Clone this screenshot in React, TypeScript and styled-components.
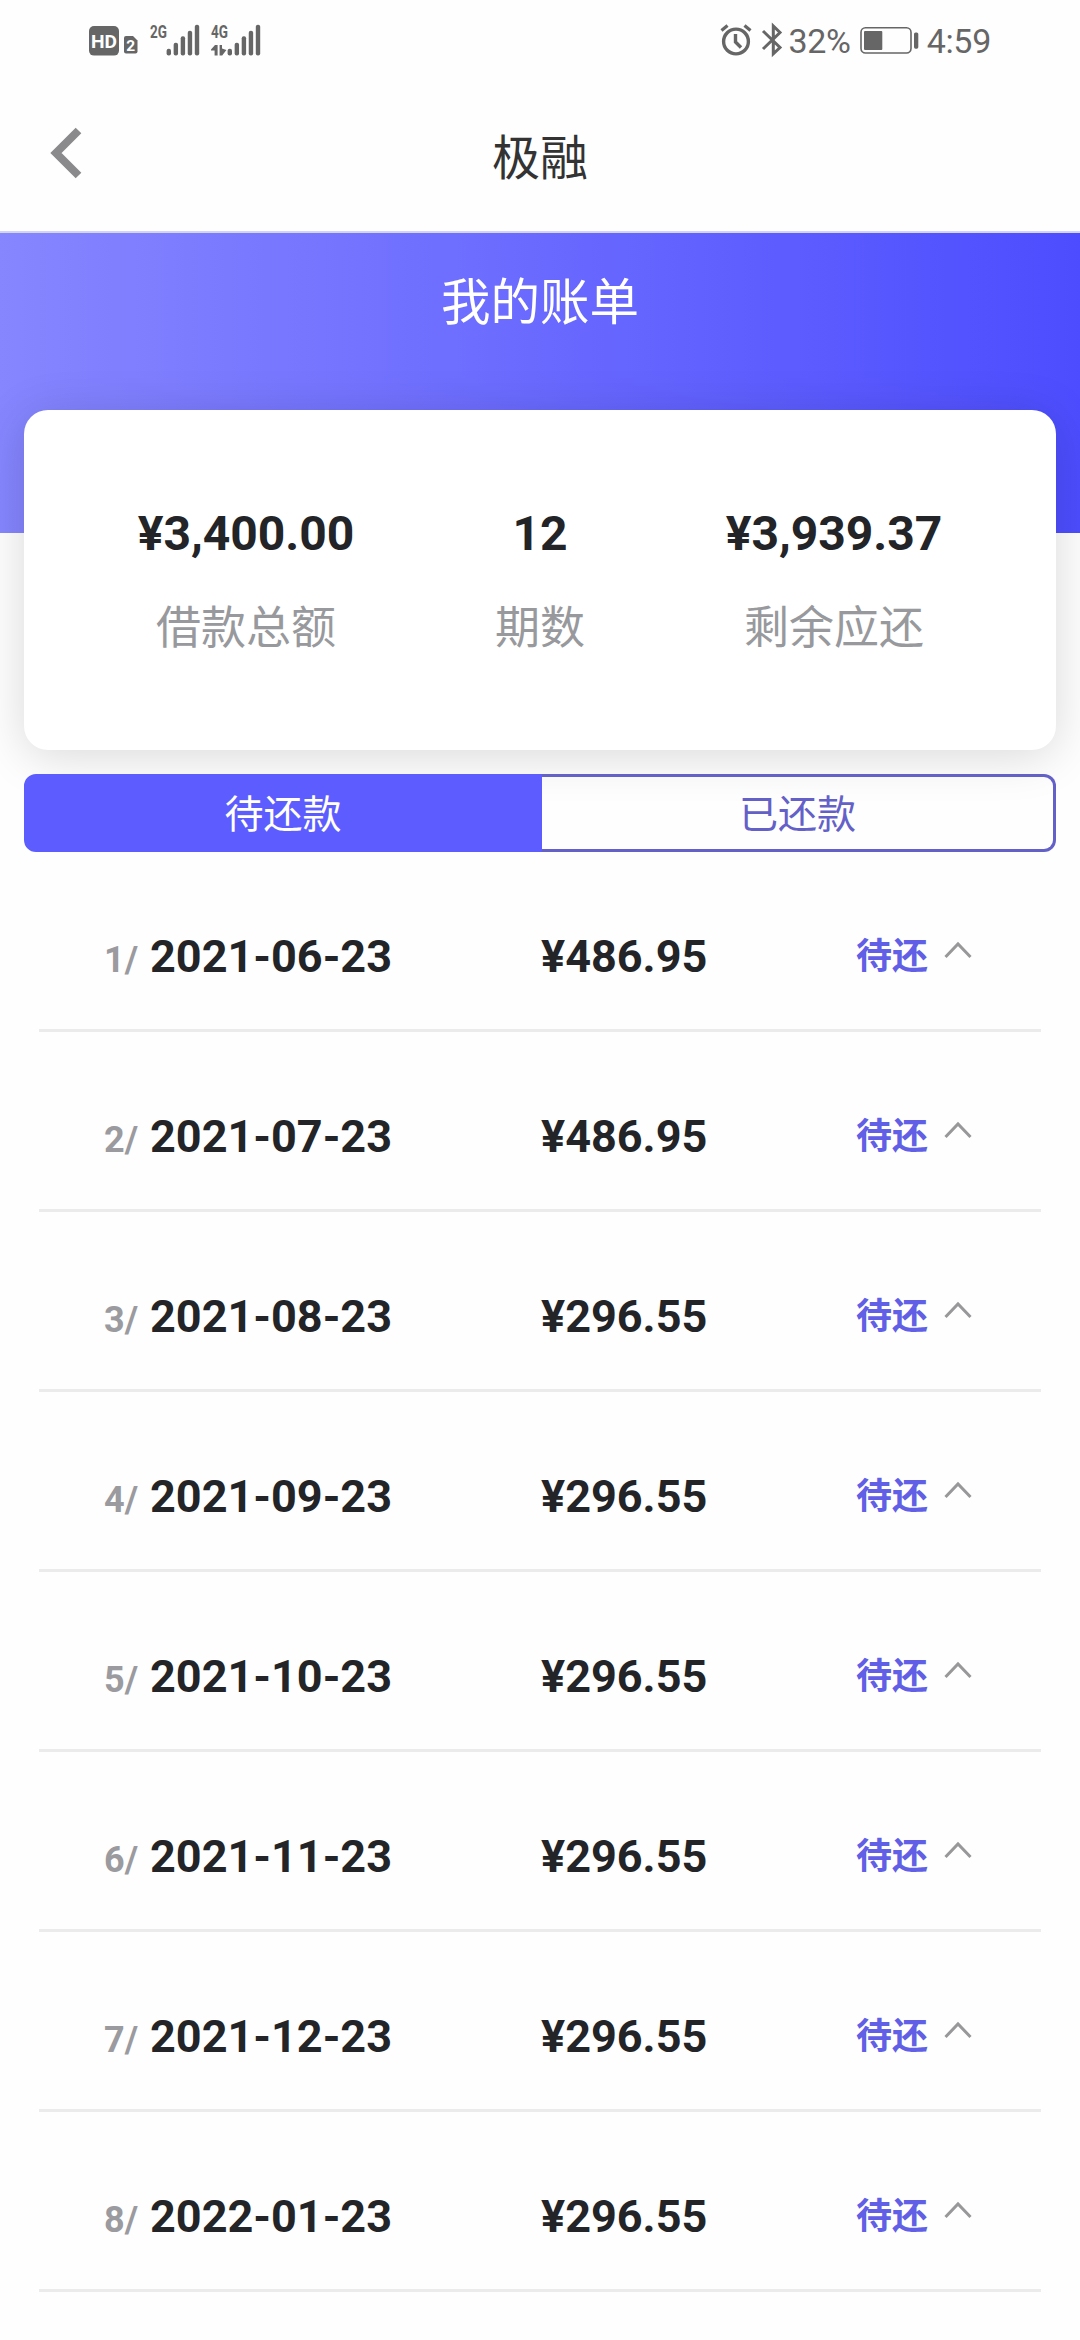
import React from 'react';
import styled, { createGlobalStyle } from 'styled-components';

const Global = createGlobalStyle`
  * { box-sizing: border-box; }
  body {
    margin: 0;
    background: #fff;
    font-family: Roboto, "Noto Sans CJK SC", sans-serif;
    color: #232427;
  }
`;

const Screen = styled.div`
  width: 1080px;
  height: 2340px;
  overflow: hidden;
  background: #fefefe;
`;

const StatusBar = styled.div`
  height: 80px;
  display: flex;
  justify-content: space-between;
  align-items: flex-start;
  padding: 20px 89px 0 88px;
  color: #666;
`;

const StatusGroup = styled.div`
  display: flex;
  align-items: flex-start;
`;

const StatusText = styled.span<{ $left: number }>`
  margin-left: ${(p) => p.$left}px;
  font-size: 34px;
  line-height: 42px;
  letter-spacing: -0.3px;
  white-space: nowrap;
`;

const SignalIcon = styled.svg<{ $left: number }>`
  margin-left: ${(p) => p.$left}px;
`;

const BatteryIcon = styled.svg`
  margin-left: 9px;
`;

const NavBar = styled.header`
  height: 153px;
  display: grid;
  grid-template-columns: 180px 1fr 180px;
  border-bottom: 2px solid #d3d4ee;
`;

const BackButton = styled.button`
  border: 0;
  background: none;
  padding: 46px 0 0 48px;
  display: flex;
  align-items: flex-start;
`;

const NavTitle = styled.h1`
  margin: 0;
  padding-top: 44px;
  font-size: 48px;
  line-height: 70px;
  font-weight: 400;
  text-align: center;
  color: #333;
`;

const Hero = styled.section`
  height: 300px;
  padding-top: 35px;
  background: linear-gradient(90deg, #8686ff, #4d4dff);
`;

const HeroTitle = styled.h2`
  margin: 0;
  font-size: 49.5px;
  line-height: 70px;
  font-weight: 400;
  text-align: center;
  color: #fff;
`;

const Card = styled.section`
  height: 340px;
  margin: -123px 24px 0;
  padding: 94px 75px 0;
  display: grid;
  grid-template-columns: repeat(3, 294px);
  align-content: start;
  border-radius: 24px;
  background: #fff;
  box-shadow: 0 6px 48px rgba(0, 0, 0, 0.15);
`;

const Stat = styled.div`
  display: flex;
  flex-direction: column;
  align-items: center;
`;

const StatValue = styled.div`
  font-size: 48px;
  line-height: 60px;
  font-weight: 700;
`;

const StatLabel = styled.div`
  margin-top: 32px;
  font-size: 45px;
  line-height: 66px;
  color: #98999d;
`;

const Tabs = styled.div`
  height: 78px;
  margin: 24px 24px 0;
  display: grid;
  grid-template-columns: 518px 1fr;
`;

const Tab = styled.div<{ $active?: boolean }>`
  height: 78px;
  display: flex;
  justify-content: center;
  padding-top: 5px;
  font-size: 39px;
  line-height: 67px;
  border: 3px solid ${(p) => (p.$active ? '#5d5dff' : '#6360c8')};
  border-radius: ${(p) => (p.$active ? '12px 0 0 12px' : '0 12px 12px 0')};
  border-left-width: ${(p) => (p.$active ? '3px' : '0')};
  background: ${(p) => (p.$active ? '#5d5dff' : 'transparent')};
  color: ${(p) => (p.$active ? '#fff' : '#6360c8')};
`;

const List = styled.ul`
  list-style: none;
  margin: 0 39px;
  padding: 0;
`;

const Row = styled.li`
  height: 180px;
  padding: 75px 0 0 65px;
  display: grid;
  grid-template-columns: 437px 315px 1fr;
  align-items: baseline;
  align-content: start;
  line-height: 60px;
  border-bottom: 3px solid #ebebeb;
  font-weight: 700;
`;

const DateCell = styled.div`
  display: flex;
  align-items: baseline;
  font-size: 45px;
`;

const Index = styled.span`
  width: 46px;
  font-size: 36px;
  color: #9a9a9f;
`;

const Amount = styled.div`
  font-size: 45px;
`;

const State = styled.div`
  align-self: start;
  display: flex;
  align-items: flex-start;
  gap: 16px;
  font-size: 36px;
  color: #605fe6;
`;

const Chevron = styled.svg`
  margin-top: 14px;
`;

function Signal({ label, data, gap }: { label: string; data?: boolean; gap: number }) {
  const tops = [28.7, 22.7, 16.3, 10.7, 4.7];
  return (
    <SignalIcon $left={gap} width="50" height="40" viewBox="0 0 50 40">
      <text x="0" y="18" fontSize="18" fontWeight="700" fontFamily="Roboto, sans-serif" textLength="17" lengthAdjust="spacingAndGlyphs" fill="#666">
        {label}
      </text>
      {tops.map((t, i) => (
        <rect key={i} x={16.6 + i * 7.05} y={t} width="4.4" height={35.4 - t} rx="2" fill="#666" />
      ))}
      {data && <path d="M4 25H6.6V35.4H3.6V30.5H0V29.6ZM8.6 25H11V28.6L15.4 30L11.2 35.4H8.6Z" fill="#666" />}
    </SignalIcon>
  );
}

function StatusIcons() {
  return (
    <StatusBar>
      <StatusGroup>
        <svg width="52" height="40" viewBox="0 0 52 40">
          <rect x="1" y="6" width="30" height="29.6" rx="5" fill="#666" />
          <text x="3" y="27.5" fontSize="18" fontWeight="700" fontFamily="Roboto, sans-serif" textLength="26" lengthAdjust="spacingAndGlyphs" fill="#fff">HD</text>
          <path d="M38 16H45L49.5 20.5V31.5Q49.5 33.5 47.5 33.5H38Q36 33.5 36 31.5V18Q36 16 38 16Z" fill="#666" />
          <text x="38.2" y="31" fontSize="15.5" fontWeight="700" fontFamily="Roboto, sans-serif" fill="#fff">2</text>
        </svg>
        <Signal label="2G" gap={10} />
        <Signal label="4G" data gap={11} />
      </StatusGroup>
      <StatusGroup>
        <svg width="66" height="40" viewBox="0 0 66 40" fill="none" stroke="#666">
          <circle cx="17" cy="21.5" r="12.4" strokeWidth="3.4" />
          <path d="M16.5 14V22L22 27.5" strokeWidth="3.4" />
          <path d="M2.5 10.5L8.5 5.5M31.5 10.5L25.5 5.5" strokeWidth="3.2" />
          <path d="M44 11L61 27.5L54.3 33.8V6L61 12.5L44 29" strokeWidth="3" />
        </svg>
        <StatusText $left={3}>32%</StatusText>
        <BatteryIcon width="60" height="40" viewBox="0 0 60 40">
          <rect x="1" y="7.8" width="50" height="25.2" rx="4.5" fill="none" stroke="#666" strokeWidth="1.6" />
          <rect x="4" y="11" width="18.3" height="19" rx="1" fill="#666" />
          <rect x="54" y="12.4" width="4.3" height="16.3" rx="1.6" fill="#666" />
        </BatteryIcon>
        <StatusText $left={7}>4:59</StatusText>
      </StatusGroup>
    </StatusBar>
  );
}

const stats = [
  { value: '¥3,400.00', label: '借款总额' },
  { value: '12', label: '期数' },
  { value: '¥3,939.37', label: '剩余应还' },
];

const bills = [
  { date: '2021-06-23', amount: '¥486.95' },
  { date: '2021-07-23', amount: '¥486.95' },
  { date: '2021-08-23', amount: '¥296.55' },
  { date: '2021-09-23', amount: '¥296.55' },
  { date: '2021-10-23', amount: '¥296.55' },
  { date: '2021-11-23', amount: '¥296.55' },
  { date: '2021-12-23', amount: '¥296.55' },
  { date: '2022-01-23', amount: '¥296.55' },
];

export default function App() {
  return (
    <Screen>
      <Global />
      <StatusIcons />
      <NavBar>
        <BackButton aria-label="返回">
          <svg width="36" height="54" viewBox="0 0 36 54" fill="none" stroke="#8a8a8c" strokeWidth="8">
            <path d="M30.5 4.5L8 27L30.5 49.5" />
          </svg>
        </BackButton>
        <NavTitle>极融</NavTitle>
      </NavBar>
      <Hero>
        <HeroTitle>我的账单</HeroTitle>
      </Hero>
      <Card>
        {stats.map((s) => (
          <Stat key={s.label}>
            <StatValue>{s.value}</StatValue>
            <StatLabel>{s.label}</StatLabel>
          </Stat>
        ))}
      </Card>
      <Tabs>
        <Tab $active>待还款</Tab>
        <Tab>已还款</Tab>
      </Tabs>
      <List>
        {bills.map((b, i) => (
          <Row key={b.date}>
            <DateCell>
              <Index>{i + 1}/</Index>
              {b.date}
            </DateCell>
            <Amount>{b.amount}</Amount>
            <State>
              待还
              <Chevron width="28" height="18" viewBox="0 0 28 18" fill="none" stroke="#98989a" strokeWidth="3">
                <path d="M1.5 16L14 3L26.5 16" />
              </Chevron>
            </State>
          </Row>
        ))}
      </List>
    </Screen>
  );
}
